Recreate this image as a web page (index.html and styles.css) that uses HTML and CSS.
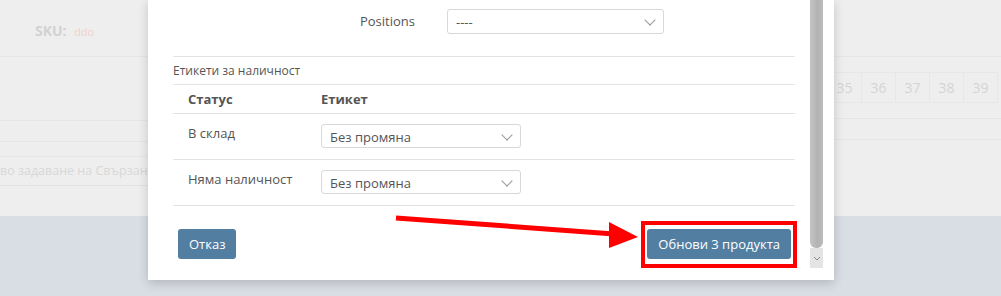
FILE: index.html
```html
<!DOCTYPE html>
<html lang="bg">
<head>
    <meta charset="UTF-8">
    <title>Масова редакция</title>
    <link rel="stylesheet" href="styles.css">
</head>
<body>
    <div class="page">
        <div class="side side-left">
            <div class="sku-row"><span class="sku-label">SKU:</span> <span class="sku-value">ddo</span></div>
            <div class="blank-row"></div>
            <div class="blank-row short"></div>
            <div class="blank-row tiny"></div>
            <div class="link-row">во задаване на Свързан</div>
        </div>
        <div class="side-spacer"></div>
        <div class="side side-right">
            <div class="sku-row"></div>
            <div class="pages">
                <span class="page-box">35</span>
                <span class="page-box">36</span>
                <span class="page-box">37</span>
                <span class="page-box">38</span>
                <span class="page-box">39</span>
            </div>
            <div class="blank-row short"></div>
        </div>
    </div>

    <div class="modal">
        <div class="modal-body">
            <div class="field-row">
                <label class="field-label">Positions</label>
                <div class="select wide">----</div>
            </div>

            <div class="section-title">Етикети за наличност</div>
            <div class="stock-table">
                <div class="t-row t-head">
                    <div class="t-col1">Статус</div>
                    <div class="t-col2">Етикет</div>
                </div>
                <div class="t-row">
                    <div class="t-col1">В склад</div>
                    <div class="t-col2"><div class="select">Без промяна</div></div>
                </div>
                <div class="t-row">
                    <div class="t-col1">Няма наличност</div>
                    <div class="t-col2"><div class="select">Без промяна</div></div>
                </div>
            </div>

            <div class="modal-footer">
                <button class="btn">Отказ</button>
                <button class="btn">Обнови 3 продукта</button>
            </div>
        </div>
        <div class="scrollbar">
            <div class="scroll-thumb"></div>
            <div class="scroll-down">
                <svg width="8" height="5" viewBox="0 0 8 5"><path d="M1 1 L4 4 L7 1" fill="none" stroke="#8a8a8a" stroke-width="1"/></svg>
            </div>
        </div>
    </div>

    <!-- annotation -->
    <div class="highlight"></div>
    <svg class="arrow" width="1001" height="296" viewBox="0 0 1001 296">
        <line x1="396" y1="218" x2="614" y2="234" stroke="#ff0000" stroke-width="5"/>
        <polygon points="609,222 638,237 609,248" fill="#ff0000"/>
    </svg>
</body>
</html>
```

FILE: styles.css
```css
body {
    margin: 0;
    width: 1001px;
    height: 296px;
    overflow: hidden;
    background-color: #d9dde4;
    font-family: "Open Sans", "Liberation Sans", sans-serif;
    font-size: 13px;
    color: #555;
    position: relative;
}
.page {
    display: flex;
    height: 216px;
    background-color: #eeeeee;
}
.side-left {
    width: 148px;
    overflow: hidden;
}
.side-spacer {
    flex: 1;
}
.side-right {
    width: 167px;
    overflow: hidden;
}
.sku-row {
    border-bottom: 1px solid #e6e6e6;
    box-sizing: border-box;
    padding: 21px 0 0 35px;
    height: 57px;
}
.sku-label {
    font-weight: bold;
    font-size: 14px;
    color: #d2d2d2;
}
.sku-value {
    font-size: 11px;
    color: #f2cfcf;
    margin-left: 4px;
}
.blank-row {
    height: 63px;
    border-bottom: 1px solid #e6e6e6;
}
.blank-row.short {
    height: 20px;
}
.blank-row.tiny {
    height: 14px;
}
.link-row {
    height: 28px;
    line-height: 28px;
    font-size: 12.5px;
    color: #d8d8d8;
    white-space: nowrap;
    border-bottom: 1px solid #e3e3e3;
}
.pages {
    display: flex;
    margin: 15px 0 0 -7px;
    height: 46px;
    border-bottom: 1px solid #e6e6e6;
}
.page-box {
    width: 35px;
    height: 31px;
    box-sizing: border-box;
    border: 1px solid #e7e7e7;
    margin-right: -1px;
    flex-shrink: 0;
    text-align: center;
    line-height: 29px;
    color: #d4d4d4;
    font-size: 14px;
}

/* modal */
.modal {
    position: absolute;
    left: 148px;
    top: 0;
    width: 686px;
    height: 280px;
    background: #fff;
    box-shadow: 0 3px 10px rgba(0, 0, 0, 0.18);
    display: flex;
}
.modal-body {
    width: 622px;
    padding-left: 25px;
}
.field-row {
    display: flex;
    align-items: center;
    border-bottom: 1px solid #e2e2e2;
    height: 57px;
    box-sizing: border-box;
    padding-bottom: 14px;
}
.field-label {
    width: 242px;
    text-align: right;
    font-size: 13px;
    color: #555;
}
.select {
    height: 24px;
    width: 200px;
    box-sizing: border-box;
    border: 1px solid #d8d8d8;
    border-radius: 3px;
    padding-left: 8px;
    line-height: 24px;
    font-size: 13px;
    color: #555;
    position: relative;
    background: #fff;
}
.select::after {
    content: "";
    position: absolute;
    right: 9px;
    top: 6px;
    width: 7px;
    height: 7px;
    border-right: 1px solid #999;
    border-bottom: 1px solid #999;
    transform: rotate(45deg);
}
.select.wide {
    width: 217px;
    height: 25px;
    margin-left: 32px;
}
.section-title {
    font-size: 12px;
    height: 27px;
    line-height: 27px;
    border-bottom: 1px solid #e2e2e2;
    color: #555;
}
.t-row {
    display: flex;
    height: 45px;
    border-bottom: 1px solid #e2e2e2;
}
.t-head {
    height: 28px;
    align-items: center;
    font-weight: bold;
    color: #555;
}
.t-col1 {
    width: 148px;
    padding-left: 15px;
    box-sizing: border-box;
    padding-top: 9px;
}
.t-col2 {
    padding-top: 10px;
}
.t-head .t-col1,
.t-head .t-col2 {
    padding-top: 0;
}
.t-row:not(.t-head) .t-col1 {
    line-height: 20px;
}
.modal-footer {
    display: flex;
    justify-content: space-between;
    padding: 23px 4px 0 5px;
}
.btn {
    background-color: #527ea2;
    color: #fff;
    border: none;
    border-radius: 3px;
    height: 30px;
    padding: 0 11px;
    font-family: "Open Sans", "Liberation Sans", sans-serif;
    font-size: 13px;
}
.scrollbar {
    margin-left: 15px;
    width: 13px;
    height: 268px;
    display: flex;
    flex-direction: column;
}
.scroll-thumb {
    height: 248px;
    background: linear-gradient(to right, #c4c4c4, #b2b2b2 60%, #bdbdbd);
    border-radius: 0 0 6px 6px;
}
.scroll-down {
    height: 20px;
    background: #e4e4e4;
    display: flex;
    align-items: center;
    justify-content: center;
}

/* annotation */
.highlight {
    position: absolute;
    left: 641px;
    top: 221px;
    width: 148px;
    height: 39px;
    border: 4px solid #ff0000;
}
.arrow {
    position: absolute;
    left: 0;
    top: 0;
}
```
